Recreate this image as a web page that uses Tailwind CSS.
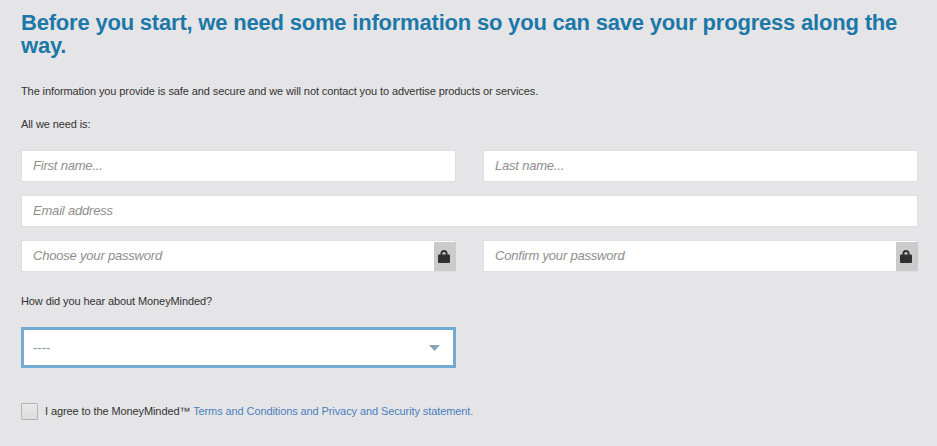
<!DOCTYPE html>
<html lang="en">
<head>
    <meta charset="UTF-8">
    <meta name="viewport" content="width=device-width, initial-scale=1.0">
    <title>MoneyMinded - Registration</title>
    <script src="https://cdn.jsdelivr.net/npm/@tailwindcss/browser@4"></script>
</head>
<body class="h-screen overflow-hidden bg-[#e5e5e7] font-['Liberation_Sans',Arial,sans-serif] text-[11px] leading-4 tracking-[-0.097px] text-[#333]">
    <form class="w-[918px] pl-[21px] pt-[11px]">
        <h1 class="text-[22px] leading-[23px] font-bold tracking-[-0.2px] text-[#1c78a8]">Before you start, we need some information so you can save your progress along the way.</h1>

        <p class="mt-[26px]">The information you provide is safe and secure and we will not contact you to advertise products or services.</p>
        <p class="mt-[17px]">All we need is:</p>

        <!-- Personal details -->
        <div class="mt-[18px] grid grid-cols-2 gap-x-[27px] gap-y-[13px]">
            <input type="text" placeholder="First name..." class="h-8 w-full border border-[#dedee0] bg-white px-[11px] pb-[2px] text-[13px] tracking-[-0.2px] italic placeholder:text-[#8e8e8e]">
            <input type="text" placeholder="Last name..." class="h-8 w-full border border-[#dedee0] bg-white px-[11px] pb-[2px] text-[13px] tracking-[-0.2px] italic placeholder:text-[#8e8e8e]">
            <input type="text" placeholder="Email address" class="col-span-2 h-8 w-full border border-[#dedee0] bg-white px-[11px] pb-[2px] text-[13px] tracking-[-0.2px] italic placeholder:text-[#8e8e8e]">
            <div class="flex h-8 border border-[#dedee0] bg-white">
                <input type="text" placeholder="Choose your password" class="min-w-0 flex-1 px-[11px] text-[13px] tracking-[-0.2px] italic placeholder:text-[#8e8e8e]">
                <span class="-mr-px mt-px flex w-[22px] justify-center bg-[#cbcbcb] pt-2 pr-[3px]">
                    <svg class="h-[13px] w-3" viewBox="0 0 12 13">
                        <path d="M3.4 6V3.6Q3.4 1 6 1T8.6 3.6V6" fill="none" stroke="#303030" stroke-width="1.9"/>
                        <rect y="4.5" width="12" height="8.5" rx="1" fill="#303030"/>
                    </svg>
                </span>
            </div>
            <div class="flex h-8 border border-[#dedee0] bg-white">
                <input type="text" placeholder="Confirm your password" class="min-w-0 flex-1 px-[11px] text-[13px] tracking-[-0.2px] italic placeholder:text-[#8e8e8e]">
                <span class="-mr-px mt-px flex w-[22px] justify-center bg-[#cbcbcb] pt-2 pr-[3px]">
                    <svg class="h-[13px] w-3" viewBox="0 0 12 13">
                        <path d="M3.4 6V3.6Q3.4 1 6 1T8.6 3.6V6" fill="none" stroke="#303030" stroke-width="1.9"/>
                        <rect y="4.5" width="12" height="8.5" rx="1" fill="#303030"/>
                    </svg>
                </span>
            </div>
        </div>

        <!-- Referral source -->
        <p class="mt-[21px]">How did you hear about MoneyMinded?</p>
        <div class="mt-[18px] flex h-[41px] w-[435px] items-center justify-between border-3 border-[#72abd1] bg-white pr-[13px] pl-[9px] text-[13px] tracking-normal text-[#7f93a5]">
            <span>----</span>
            <svg class="h-[6px] w-[11px]" viewBox="0 0 11 6"><path d="M0 0h11L5.5 6z" fill="#8aa3b6"/></svg>
        </div>

        <!-- Terms -->
        <label class="mt-[35px] flex items-start">
            <span class="mr-[7px] size-[17px] rounded-[1px] border border-[#b4b4b4] bg-linear-to-b from-[#e9e9e9] to-[#dcdcdc]"></span>
            <span>I agree to the MoneyMinded™ <a href="#" class="text-[#4a80bd]">Terms and Conditions and Privacy and Security statement.</a></span>
        </label>
    </form>
</body>
</html>
